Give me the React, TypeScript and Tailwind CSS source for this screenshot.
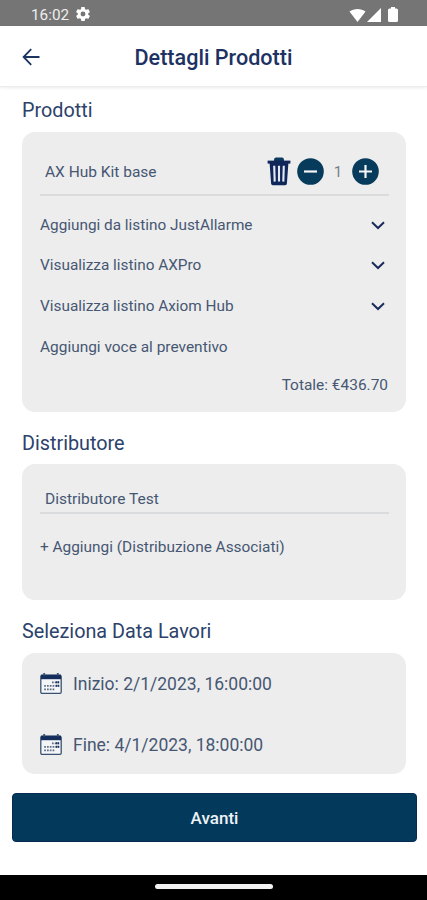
import React from 'react';

interface Product {
    id: string;
    name: string;
    quantity: number;
}

interface WorkDate {
    id: string;
    label: string;
    className: string;
}

const products: Product[] = [{ id: 'ax-hub', name: 'AX Hub Kit base', quantity: 1 }];

const priceLists = [
    { id: 'justallarme', label: 'Aggiungi da listino JustAllarme' },
    { id: 'axpro', label: 'Visualizza listino AXPro' },
    { id: 'axiom', label: 'Visualizza listino Axiom Hub' },
];

const workDates: WorkDate[] = [
    { id: 'start', label: 'Inizio: 2/1/2023, 16:00:00', className: 'h-[61px]' },
    { id: 'end', label: 'Fine: 4/1/2023, 18:00:00', className: 'h-[60px]' },
];

function StatusBar() {
    return (
        <div className="flex h-[26px] items-center justify-between bg-[#757575] pt-[3px] pr-[29px] pl-[31px] text-white">
            <div className="flex items-center gap-[7px]">
                <span className="pt-[2px] text-[15.300px] leading-none text-[#eeeeee]">16:02</span>
                <svg viewBox="2 2 20 20" className="h-[14px] w-[14px]" fill="currentColor">
                    <path d="M19.43 12.98c.04-.32.07-.64.07-.98s-.03-.66-.07-.98l2.11-1.65c.19-.15.24-.42.12-.64l-2-3.46c-.12-.22-.39-.3-.61-.22l-2.49 1c-.52-.4-1.08-.73-1.69-.98l-.38-2.65A.488.488 0 0 0 14 2h-4c-.25 0-.46.18-.49.42l-.38 2.65c-.61.25-1.17.59-1.69.98l-2.49-1c-.23-.09-.49 0-.61.22l-2 3.46c-.13.22-.07.49.12.64l2.11 1.65c-.04.32-.07.65-.07.98s.03.66.07.98l-2.11 1.65c-.19.15-.24.42-.12.64l2 3.46c.12.22.39.3.61.22l2.49-1c.52.4 1.08.73 1.69.98l.38 2.65c.03.24.24.42.49.42h4c.25 0 .46-.18.49-.42l.38-2.65c.61-.25 1.17-.59 1.69-.98l2.49 1c.23.09.49 0 .61-.22l2-3.46c.12-.22.07-.49-.12-.64zM12 15.5A3.5 3.5 0 1 1 12 8.500a3.5 3.5 0 0 1 0 7z" />
                </svg>
            </div>
            <div className="flex items-center">
                <svg viewBox="0 0 17 14" className="h-[14px] w-[17px]" fill="currentColor">
                    <path d="M0.500 3.500C5 0 12 0 16.500 3.500L8.500 14Z" />
                </svg>
                <svg viewBox="0 0 14 14" className="ml-px h-[14px] w-[14px]" fill="currentColor">
                    <path d="M14 0V14H0Z" />
                </svg>
                <svg viewBox="0 0 10 15" className="ml-[7px] h-[15px] w-[10px]" fill="currentColor">
                    <path d="M3 0h4v1.500h1.500a1.500 1.500 0 0 1 1.500 1.500V13.500a1.500 1.500 0 0 1-1.500 1.500h-7A1.500 1.500 0 0 1 0 13.500V3a1.500 1.500 0 0 1 1.500-1.500H3Z" />
                </svg>
            </div>
        </div>
    );
}

function Header() {
    return (
        <header className="grid h-[61px] grid-cols-[60px_1fr_60px] items-center border-b border-[#ececec] shadow-[0_1px_3px_rgba(0,0,0,0.08)]">
            <button className="mt-px ml-[22px] w-[18px]">
                <svg viewBox="0 0 18 18" className="h-[18px] w-[18px]" fill="none" stroke="#1b3560" strokeWidth="1.8">
                    <path d="M17.500 9H1.800M9.200 1.200L1.600 9l7.600 7.800" />
                </svg>
            </button>
            <h1 className="pt-1 text-center text-[21.600px] leading-6 font-medium whitespace-nowrap text-[#1d3263]">
                Dettagli Prodotti
            </h1>
        </header>
    );
}

function TrashIcon() {
    return (
        <svg viewBox="0 0 24 29" className="h-[29px] w-6" fill="none">
            <path d="M7 4V2.800Q7 .6 9.200 .6h5.600q2.200 0 2.200 2.200V4Z" fill="#0a3a5c" />
            <path d="M.6 3.600h22.800v3H.6z" fill="#10265a" />
            <path d="M2.600 6h18.800l-1.500 20.600q-.1 1.600-1.700 1.600H5.800q-1.600 0-1.700-1.600Z" fill="#10265a" />
            <path d="M7.200 8.800l.5 15.800M12 8.800v15.800M16.800 8.800l-.5 15.800" stroke="#e4e8ef" strokeWidth="2.100" />
        </svg>
    );
}

function RoundButton({ type }: { type: 'minus' | 'plus' }) {
    return (
        <button>
            <svg viewBox="0 0 27 27" className="h-[27px] w-[27px]">
                <circle cx="13.500" cy="13.500" r="13.300" fill="#073b5c" />
                <path
                    d={type === 'plus' ? 'M7 13.500h13M13.500 7v13' : 'M7 13.500h13'}
                    stroke="#f3f5f7"
                    strokeWidth="2.200"
                />
            </svg>
        </button>
    );
}

function ChevronIcon() {
    return (
        <svg viewBox="0 0 14 9" className="mr-[4px] h-[9px] w-[14px]" fill="none" stroke="#1a2c5c" strokeWidth="2">
            <path d="M1 1.200L7 7l6-5.800" />
        </svg>
    );
}

function CalendarIcon() {
    return (
        <svg viewBox="0 0 22 21" className="h-[21px] w-[22px]" fill="none">
            <rect x="0.800" y="2.300" width="20.400" height="18" rx="1.200" fill="#f4f5f7" stroke="#3a5272" strokeWidth="1.300" />
            <path d="M1 1.600h20v4.600H1z" fill="#132d5c" />
            <path d="M4.200 0v2.500M17.800 0v2.500" stroke="#3a5272" strokeWidth="1.800" />
            <path d="M12 9.300h7M4.200 12.800h15M4.200 16.300h11" stroke="#5d6d87" strokeWidth="1.700" strokeDasharray="1.700 1.100" />
            <path d="M15.800 12.800h3.400M15.800 9.300h3.400" stroke="#1d3561" strokeWidth="2" strokeDasharray="1.500 .4" />
        </svg>
    );
}

function SectionTitle({ children }: { children: React.ReactNode }) {
    return <h2 className="text-[19.800px] leading-6 text-[#2c426b]">{children}</h2>;
}

export default function App() {
    return (
        <div className="flex h-[900px] w-[427px] flex-col overflow-hidden bg-white font-['Roboto',sans-serif] text-[#465773]">
            <StatusBar />
            <Header />

            <main className="flex-1 pt-[12px]">
                <section className="px-[22px]">
                    <SectionTitle>Prodotti</SectionTitle>
                    <div className="mt-[9px] mr-[-1px] h-[280px] rounded-[13px] bg-[#ededed] pt-[17px] pr-[17px] pl-[18px]">
                        {products.map((product) => (
                            <div
                                key={product.id}
                                className="flex h-[47px] items-center border-b-2 border-[#dadbdc] pr-[10px] pl-[5px]"
                            >
                                <span className="flex-1 pt-[3px] text-[15.500px]">{product.name}</span>
                                <TrashIcon />
                                <span className="ml-[6px] flex">
                                    <RoundButton type="minus" />
                                </span>
                                <span className="w-7 pt-px text-center text-[15px] text-[#777f8b]">{product.quantity}</span>
                                <RoundButton type="plus" />
                            </div>
                        ))}
                        <div className="pt-[9px]">
                            {priceLists.map((list) => (
                                <button key={list.id} className="flex h-[40.600px] w-full items-center justify-between">
                                    <span className="text-[15.350px]">{list.label}</span>
                                    <ChevronIcon />
                                </button>
                            ))}
                            <button className="flex h-[40px] items-center pt-px text-[15.450px]">Aggiungi voce al preventivo</button>
                        </div>
                        <p className="pt-[6px] pr-px text-right text-[15.450px] leading-6">Totale: €436.70</p>
                    </div>
                </section>

                <section className="px-[22px] pt-[20px]">
                    <SectionTitle>Distributore</SectionTitle>
                    <div className="mt-[8px] mr-[-1px] h-[136px] rounded-[13px] bg-[#ededed] pt-[18px] pr-[17px] pl-[18px]">
                        <div className="flex h-8 items-center border-b-2 border-[#dadbdc] pt-[5px] pl-[5px] text-[15.500px]">
                            Distributore Test
                        </div>
                        <button className="mt-[21px] block text-[15.400px] leading-6">+ Aggiungi (Distribuzione Associati)</button>
                    </div>
                </section>

                <section className="px-[22px] pt-[20px]">
                    <SectionTitle>Seleziona Data Lavori</SectionTitle>
                    <div className="mt-[9px] mr-[-1px] h-[121px] rounded-[13px] bg-[#ededed] px-[18px]">
                        {workDates.map((date) => (
                            <div key={date.id} className={`flex items-center gap-[11px] ${date.className}`}>
                                <CalendarIcon />
                                <span className="pt-[2px] text-[17.500px]">{date.label}</span>
                            </div>
                        ))}
                    </div>
                </section>

                <div className="pt-[19px] pr-[10px] pl-3">
                    <button className="flex h-[49px] w-full items-center justify-center rounded-[4px] border border-[#062a52] bg-[#033a5c] pt-[2px] text-[17px] font-medium text-[#eef2f6]">
                        Avanti
                    </button>
                </div>
            </main>

            <div className="flex h-[25px] justify-center bg-black pt-[9px]">
                <div className="h-[5px] w-[118px] rounded-full bg-[#f2f2f2]" />
            </div>
        </div>
    );
}
